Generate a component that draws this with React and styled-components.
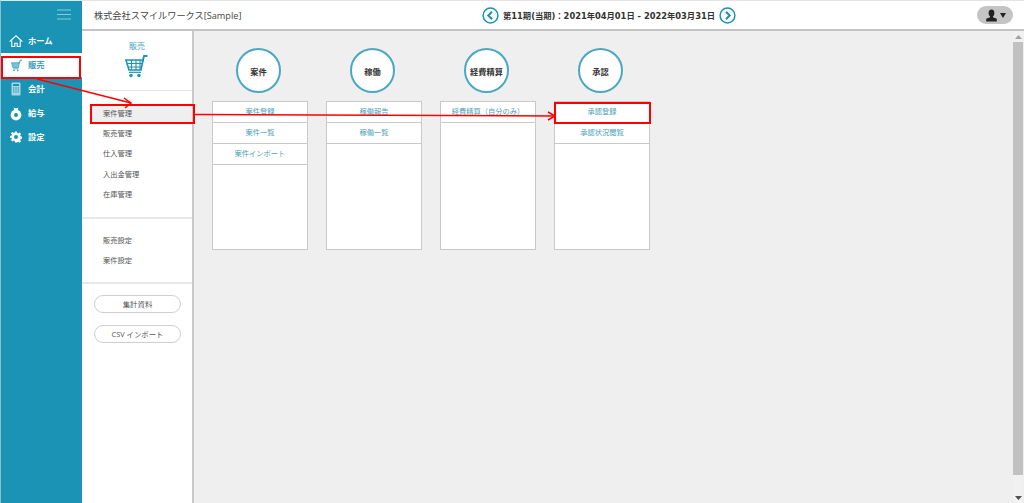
import React from "react";
import styled, { createGlobalStyle } from "styled-components";

const Global = createGlobalStyle`
  html, body { margin: 0; padding: 0; height: 100%; overflow: hidden; background: #fff; }
  body { font-family: "Open Sans", "Noto Sans CJK JP", sans-serif; }
  * { box-sizing: border-box; }
`;

const Page = styled.div`
  position: relative;
  width: 1024px;
  height: 503px;
  display: flex;
  overflow: hidden;
  background: #fff;
`;
const Sidebar = styled.nav`
  width: 82px;
  flex: none;
  background: #1a93b4;
  border-left: 1px solid #7fc0d3;
  border-top: 1px solid #d8e8ec;
  display: flex;
  flex-direction: column;
`;
const Burger = styled.div`
  height: 29px;
  display: flex;
  justify-content: flex-end;
  align-items: center;
  padding-right: 11px;
  margin-top: -1px;
`;
const NavList = styled.div`
  display: flex;
  flex-direction: column;
`;
const NavItem = styled.div`
  height: 24px;
  display: flex;
  align-items: center;
  gap: 5px;
  padding-left: 8px;
  color: ${(p) => (p.$active ? "#3d9fbb" : "#fff")};
  background: ${(p) => (p.$active ? "#fff" : "transparent")};
  font-size: 8.3px;
  font-weight: 700;
  line-height: 1;
`;
const NavIcon = styled.span`
  width: 14px;
  height: 14px;
  display: flex;
  align-items: center;
  justify-content: center;
  flex: none;
`;
const Content = styled.div`
  flex: 1;
  display: flex;
  flex-direction: column;
  min-width: 0;
`;
const Header = styled.header`
  height: 31px;
  flex: none;
  background: #fff;
  border-bottom: 2px solid #c4c4c4;
  border-top: 1px solid #e4e4e4;
  display: grid;
  grid-template-columns: 388px auto 1fr;
  align-items: center;
  padding: 0 11px 0 12px;
`;
const Company = styled.div`
  font-size: 9.2px;
  color: #444;
  white-space: nowrap;
`;
const Period = styled.div`
  display: flex;
  align-items: center;
  gap: 4px;
  font-family: "DejaVu Sans", "Noto Sans CJK JP", sans-serif;
  font-size: 8.3px;
  font-weight: 700;
  color: #333;
  white-space: nowrap;
`;
const UserPill = styled.div`
  justify-self: end;
  width: 36px;
  height: 18px;
  border-radius: 9px;
  background: #c4c4c4;
  display: flex;
  align-items: center;
  justify-content: center;
  gap: 2px;
`;
const Body = styled.div`
  flex: 1;
  display: flex;
  min-height: 0;
`;
const Panel = styled.aside`
  width: 112px;
  flex: none;
  background: #fff;
  border-right: 2px solid #c9c9c9;
  display: flex;
  flex-direction: column;
`;
const PanelHead = styled.div`
  height: 60px;
  flex: none;
  padding-top: 8px;
  display: flex;
  flex-direction: column;
  align-items: center;
  gap: 2px;
  color: #4aa3bd;
  font-size: 8px;
  line-height: 13px;
  border-bottom: 1px solid #e4e4e4;
`;
const MenuGroup = styled.div`
  display: flex;
  flex-direction: column;
  padding: ${(p) => p.$pad};
  border-bottom: 2px solid #e8e8e8;
`;
const MenuItem = styled.div`
  height: 20.4px;
  display: flex;
  align-items: center;
  padding: 0 0 3px ${(p) => (p.$active ? "13px" : "21px")};
  margin-left: ${(p) => (p.$active ? "8px" : "0")};
  font-size: 7.25px;
  color: #555;
  background: ${(p) => (p.$active ? "#efefef" : "transparent")};
`;
const Buttons = styled.div`
  display: flex;
  flex-direction: column;
  gap: 12px;
  padding: 11px 11px 0 12px;
`;
const PillButton = styled.div`
  height: 18px;
  border: 1px solid #cfcfcf;
  border-radius: 9px;
  display: flex;
  align-items: center;
  justify-content: center;
  font-size: 7.4px;
  color: #555;
  background: #fff;
`;
const Main = styled.main`
  flex: 1;
  background: #efefef;
  display: flex;
  min-width: 0;
`;
const Columns = styled.div`
  flex: 1;
  display: flex;
  gap: 18px;
  padding: 17px 0 0 18px;
`;
const Column = styled.section`
  width: 96px;
  display: flex;
  flex-direction: column;
`;
const Circle = styled.div`
  width: 45px;
  height: 45px;
  border-radius: 50%;
  border: 2px solid #4ba8c2;
  background: #fff;
  margin: 0 0 8px 24px;
  display: flex;
  align-items: center;
  justify-content: center;
  font-size: 8.2px;
  font-weight: 700;
  color: #333;
  white-space: nowrap;
`;
const Card = styled.div`
  height: 149px;
  background: #fff;
  border: 1px solid #c9c9c9;
  display: flex;
  flex-direction: column;
`;
const CardRow = styled.div`
  height: 21px;
  flex: none;
  border-bottom: 1px solid #c9c9c9;
  display: flex;
  align-items: center;
  justify-content: center;
  font-size: 7.25px;
  color: #4f9fb8;
  white-space: nowrap;
  padding-bottom: 2px;
`;
const Scrollbar = styled.div`
  width: 10px;
  flex: none;
  background: #f1f1f1;
  display: flex;
  flex-direction: column;
  align-items: center;
  margin-right: 1px;
`;
const ScrollArrow = styled.div`
  height: 11px;
  flex: none;
  display: flex;
  align-items: center;
  justify-content: center;
`;
const ScrollThumb = styled.div`
  width: 100%;
  height: 433px;
  flex: none;
  background: #c1c1c1;
`;
const ScrollSpacer = styled.div`
  flex: 1;
`;
const RedBox = styled.div`
  position: absolute;
  left: ${(p) => p.$x}px;
  top: ${(p) => p.$y}px;
  width: ${(p) => p.$w}px;
  height: ${(p) => p.$h}px;
  border: 2px solid #f00;
  pointer-events: none;
`;
const Arrows = styled.svg`
  position: absolute;
  left: 0;
  top: 0;
  pointer-events: none;
`;

const HomeIcon = () => (
  <svg width="14" height="14" viewBox="0 0 14 14" fill="none" stroke="#fff" strokeWidth="1.1">
    <path d="M.6 7.6 7 1.800l6.400 5.800" />
    <path d="M2.800 6.500v6h3V9.200h2.400v3.300h3v-6" />
  </svg>
);
const CartSmall = () => (
  <svg width="13" height="13" viewBox="0 0 13 13" fill="none" stroke="#3fa3bf">
    <path d="M1.500 3.800h7.800L8.400 8.800H3z" fill="#7cc0d4" strokeWidth=".8" />
    <path d="M9.300 4.500 10.200 1.200h1.800" strokeWidth="1" />
    <path d="M3.400 9.800h5" strokeWidth=".7" />
    <circle cx="4" cy="11.300" r=".9" fill="#3fa3bf" stroke="none" />
    <circle cx="7.800" cy="11.300" r=".9" fill="#3fa3bf" stroke="none" />
  </svg>
);
const CalcIcon = () => (
  <svg width="12" height="14" viewBox="0 0 12 14">
    <rect x="1.500" y="0.500" width="9" height="13" rx="1" fill="#a8d6e3" />
    <rect x="3" y="2" width="6" height="2" fill="#1a93b4" />
    <path d="M3 6h6M3 8h6M3 10h6" stroke="#1a93b4" strokeWidth="1" strokeDasharray="1.400 .9" />
  </svg>
);
const BagIcon = () => (
  <svg width="14" height="15" viewBox="0 0 14 15">
    <circle cx="7" cy="9" r="5.400" fill="#fff" />
    <path d="M4.500 1.500c1 1 4 1 5 0L8.700 4H5.300z" fill="#fff" />
    <circle cx="7" cy="9" r="2" fill="#1a93b4" />
  </svg>
);
const GearIcon = () => (
  <svg width="12" height="12" viewBox="0 0 24 24" fill="#fff">
    <path fillRule="evenodd" d="M10 1h4l.6 3.200 2 .8 2.700-1.800 2.800 2.800-1.800 2.700.8 2 3 .6v4l-3 .6-.8 2 1.800 2.700-2.800 2.800-2.700-1.800-2 .8L14 23h-4l-.6-3.200-2-.8-2.700 1.800-2.800-2.800 1.800-2.700-.8-2L0 14v-4l3-.6.8-2L2 4.700 4.700 2l2.700 1.800 2-.8zM12 8a4 4 0 1 0 0 8 4 4 0 0 0 0-8z" />
  </svg>
);
const BigCart = () => (
  <svg width="24" height="24" viewBox="0 0 24 24" fill="none" stroke="#1a93b4">
    <path d="M1 6h17l-2 10H4z" strokeWidth="1.600" />
    <path d="M6.500 6v10M11 6v10M15 6v10M2.500 9.500h15M3.500 13h13" strokeWidth="1.100" />
    <path d="M17.500 8 19 2h3.500" strokeWidth="1.800" />
    <path d="M4 18.300h12" strokeWidth="1.200" />
    <circle cx="6" cy="21.500" r="1.700" fill="#1a93b4" stroke="none" />
    <circle cx="14" cy="21.500" r="1.700" fill="#1a93b4" stroke="none" />
  </svg>
);
const Chevron = ({ dir }) => (
  <svg width="17" height="17" viewBox="0 0 17 17" fill="none" stroke="#1a93b4">
    <circle cx="8.500" cy="8.500" r="7.400" strokeWidth="1.500" />
    <path d={dir === "left" ? "M10 4.800 6.300 8.500 10 12.200" : "M7 4.800 10.700 8.500 7 12.200"} strokeWidth="2" />
  </svg>
);
const UserIcon = () => (
  <svg width="13" height="13" viewBox="0 0 13 13" fill="#222">
    <ellipse cx="6.500" cy="4" rx="2.900" ry="3.500" />
    <path d="M5 7h3v1.300l3.800 1.500v2.700H1.200V9.800L5 8.300z" />
  </svg>
);
const Caret = () => (
  <svg width="6" height="5" viewBox="0 0 6 5" fill="#222"><path d="M0 0h6L3 5z" /></svg>
);
const Tri = ({ down }) => (
  <svg width="7" height="4" viewBox="0 0 7 4" fill={down ? "#505050" : "#a3a3a3"}>
    <path d={down ? "M0 0h7L3.500 4z" : "M3.500 0 7 4H0z"} />
  </svg>
);

const nav = [
  ["ホーム", <HomeIcon />],
  ["販売", <CartSmall />, true],
  ["会計", <CalcIcon />],
  ["給与", <BagIcon />],
  ["設定", <GearIcon />],
];
const columns = [
  ["案件", ["案件登録", "案件一覧", "案件インポート"]],
  ["稼働", ["稼働報告", "稼働一覧"]],
  ["経費精算", ["経費精算（自分のみ）"]],
  ["承認", ["承認登録", "承認状況閲覧"]],
];

export default function App() {
  return (
    <Page>
      <Global />
      <Sidebar>
        <Burger>
          <svg width="14" height="11" viewBox="0 0 14 11" stroke="#8cc9da" strokeWidth="1.200">
            <path d="M0 1h14M0 5.500h14M0 10h14" />
          </svg>
        </Burger>
        <NavList>
          {nav.map(([label, icon, active]) => (
            <NavItem key={label} $active={active}>
              <NavIcon>{icon}</NavIcon>
              {label}
            </NavItem>
          ))}
        </NavList>
      </Sidebar>
      <Content>
        <Header>
          <Company>株式会社スマイルワークス[Sample]</Company>
          <Period>
            <Chevron dir="left" />
            <span>第11期(当期)：2021年04月01日 - 2022年03月31日</span>
            <Chevron dir="right" />
          </Period>
          <UserPill>
            <UserIcon />
            <Caret />
          </UserPill>
        </Header>
        <Body>
          <Panel>
            <PanelHead>
              販売
              <BigCart />
            </PanelHead>
            <MenuGroup $pad="13px 0 11px">
              {["案件管理", "販売管理", "仕入管理", "入出金管理", "在庫管理"].map((m, i) => (
                <MenuItem key={m} $active={i === 0}>{m}</MenuItem>
              ))}
            </MenuGroup>
            <MenuGroup $pad="12px 0 10px">
              {["販売設定", "案件設定"].map((m) => (
                <MenuItem key={m}>{m}</MenuItem>
              ))}
            </MenuGroup>
            <Buttons>
              <PillButton>集計資料</PillButton>
              <PillButton>CSV インポート</PillButton>
            </Buttons>
          </Panel>
          <Main>
            <Columns>
              {columns.map(([title, rows]) => (
                <Column key={title}>
                  <Circle>{title}</Circle>
                  <Card>
                    {rows.map((r) => (
                      <CardRow key={r}>{r}</CardRow>
                    ))}
                  </Card>
                </Column>
              ))}
            </Columns>
            <Scrollbar>
              <ScrollArrow><Tri /></ScrollArrow>
              <ScrollThumb />
              <ScrollSpacer />
              <ScrollArrow><Tri down /></ScrollArrow>
            </Scrollbar>
          </Main>
        </Body>
      </Content>
      <RedBox $x={1} $y={56} $w={80} $h={23} />
      <RedBox $x={90} $y={104} $w={105} $h={20} />
      <RedBox $x={554} $y={102} $w={97} $h={22} />
      <Arrows width="1024" height="503" viewBox="0 0 1024 503" fill="none" stroke="#f00">
        <path d="M37 79 131 103" strokeWidth="1.500" />
        <path d="M124 98 131 103 125 108" strokeWidth="1.500" />
        <path d="M195 114.500 554 116" strokeWidth="1.500" />
        <path d="M548 112 555 116 548 120" strokeWidth="1.500" />
      </Arrows>
    </Page>
  );
}
